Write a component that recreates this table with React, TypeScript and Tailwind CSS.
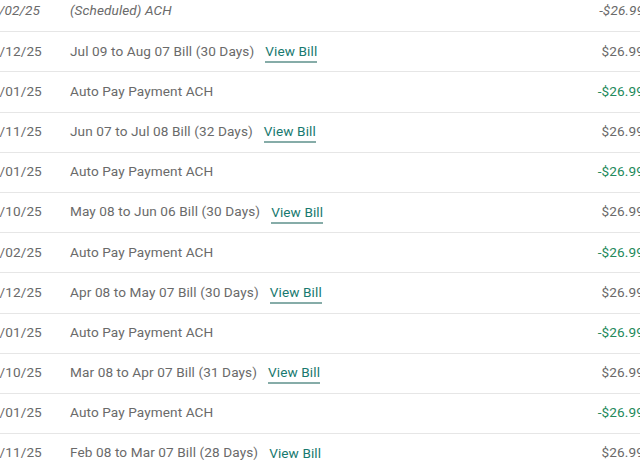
import React from "react";

type Row = { date: string; desc: string; amount: string; kind: "sched" | "bill" | "pay" };

const rows: Row[] = [
  { date: "08/02/25", desc: "(Scheduled) ACH", amount: "-$26.99", kind: "sched" },
  { date: "07/12/25", desc: "Jul 09 to Aug 07 Bill (30 Days)", amount: "$26.99", kind: "bill" },
  { date: "07/01/25", desc: "Auto Pay Payment ACH", amount: "-$26.99", kind: "pay" },
  { date: "06/11/25", desc: "Jun 07 to Jul 08 Bill (32 Days)", amount: "$26.99", kind: "bill" },
  { date: "06/01/25", desc: "Auto Pay Payment ACH", amount: "-$26.99", kind: "pay" },
  { date: "05/10/25", desc: "May 08 to Jun 06 Bill (30 Days)", amount: "$26.99", kind: "bill" },
  { date: "05/02/25", desc: "Auto Pay Payment ACH", amount: "-$26.99", kind: "pay" },
  { date: "04/12/25", desc: "Apr 08 to May 07 Bill (30 Days)", amount: "$26.99", kind: "bill" },
  { date: "04/01/25", desc: "Auto Pay Payment ACH", amount: "-$26.99", kind: "pay" },
  { date: "03/10/25", desc: "Mar 08 to Apr 07 Bill (31 Days)", amount: "$26.99", kind: "bill" },
  { date: "03/01/25", desc: "Auto Pay Payment ACH", amount: "-$26.99", kind: "pay" },
  { date: "02/11/25", desc: "Feb 08 to Mar 07 Bill (28 Days)", amount: "$26.99", kind: "bill" },
];

export default function App() {
  return (
    <div
      className="w-[640px] h-[460px] overflow-hidden bg-white"
      style={{ fontFamily: "Roboto, 'Liberation Sans', sans-serif" }}
    >
      <div className="ml-[-16px] w-[660px] mt-[-8px] flex flex-col">
        {rows.map((r, i) => (
          <div
            key={i}
            className="flex items-center h-[40.2px] pb-[2px] border-b border-[#e6e6e6] text-[13.6px] tracking-[0.1px] text-[#6a6a6a]"
          >
            <div className={`w-[86px] shrink-0 ${r.kind === "sched" ? "italic" : ""}`}>{r.date}</div>
            <div className="flex-1 flex items-center">
              <span className={r.kind === "sched" ? "italic" : ""}>{r.desc}</span>
              {r.kind === "bill" && (
                <span className="ml-[11px] text-[#18796f] border-b-2 border-[#86aca8] leading-[18px] pb-[1px] mt-[3px]">
                  View Bill
                </span>
              )}
            </div>
            <div
              className={`text-right ${
                r.kind === "pay" ? "text-[#238a5c]" : "text-[#6a6a6a]"
              } ${r.kind === "sched" ? "italic" : ""}`}
            >
              {r.amount}
            </div>
          </div>
        ))}
      </div>
    </div>
  );
}
